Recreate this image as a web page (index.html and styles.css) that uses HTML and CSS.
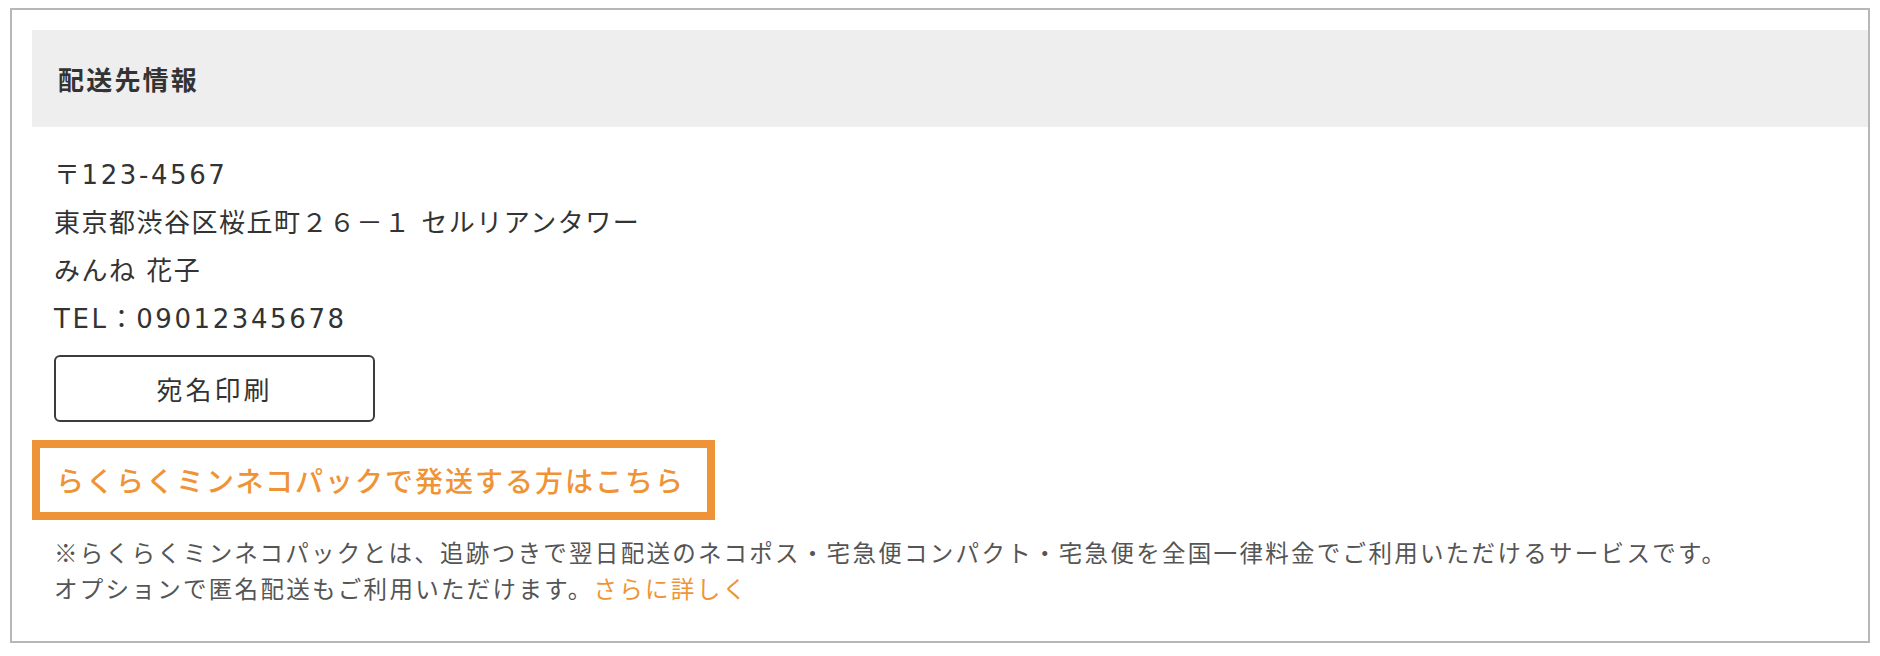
FILE: index.html
```html
<!DOCTYPE html>
<html lang="ja">
<head>
<meta charset="utf-8">
<title>配送先情報</title>
<link rel="stylesheet" href="styles.css">
</head>
<body>
<section class="card">
  <div class="card-head"><h2 class="card-title">配送先情報</h2></div>
  <div class="address">
    <p class="address-line">〒<span class="latin">123-4567</span></p>
    <p class="address-line">東京都渋谷区桜丘町２６－１ セルリアンタワー</p>
    <p class="address-line">みんね 花子</p>
    <p class="address-line"><span class="latin">TEL</span>：<span class="latin">09012345678</span></p>
    <button class="print-btn" type="button">宛名印刷</button>
  </div>
  <a class="rakuraku" href="#">らくらくミンネコパックで発送する方はこちら</a>
  <p class="note"><span class="kome">※</span>らくらくミンネコパックとは、追跡つきで翌日配送のネコポス・宅急便コンパクト・宅急便を全国一律料金でご利用いただけるサービスです。<br>オプションで匿名配送もご利用いただけます。<a class="note-link" href="#">さらに詳しく</a></p>
</section>
</body>
</html>
```
FILE: styles.css
```css
html, body {
  margin: 0;
  padding: 0;
  background: #ffffff;
}

body {
  font-family: "DejaVu Sans", "Noto Sans CJK JP", sans-serif;
  color: #333333;
}

.card {
  box-sizing: border-box;
  margin: 8px 10px 0;
  height: 635px;
  border: 2px solid #b7b7b7;
  padding: 20px 0 0 20px;
}

.card-head {
  height: 97px;
  background: #eeeeee;
  display: flex;
  align-items: center;
  padding-left: 26px;
}

.card-title {
  margin: 0;
  font-family: "Noto Sans CJK JP", sans-serif;
  font-size: 26px;
  font-weight: 700;
  letter-spacing: 2.2px;
  color: #333333;
}

.address {
  padding: 24px 0 0 22px;
}

.address-line {
  margin: 0;
  font-size: 26px;
  line-height: 48px;
  letter-spacing: 1.5px;
  color: #333333;
}

.latin {
  letter-spacing: 2.6px;
}

.print-btn {
  display: flex;
  align-items: center;
  justify-content: center;
  box-sizing: border-box;
  margin-top: 12px;
  width: 321px;
  height: 67px;
  border: 2px solid #3c3c3c;
  border-radius: 6px;
  background: #ffffff;
  font-family: "Noto Sans CJK JP", sans-serif;
  font-size: 26px;
  letter-spacing: 3px;
  color: #333333;
  padding: 0;
}

.rakuraku {
  display: flex;
  align-items: center;
  box-sizing: border-box;
  margin-top: 18px;
  width: 683px;
  height: 80px;
  border: 8px solid #ef9436;
  padding-left: 16px;
  font-family: "Noto Sans CJK JP", sans-serif;
  font-size: 28px;
  font-weight: 500;
  letter-spacing: 2px;
  color: #ef9436;
  text-decoration: none;
}

.note {
  margin: 14px 0 0;
  padding-left: 22px;
  font-family: "Noto Sans CJK JP", sans-serif;
  font-size: 23.5px;
  line-height: 36px;
  letter-spacing: 2.3px;
  color: #555555;
}

.kome {
  font-family: "Noto Sans CJK JP", sans-serif;
}

.note-link {
  color: #ef9436;
  text-decoration: none;
}
```
